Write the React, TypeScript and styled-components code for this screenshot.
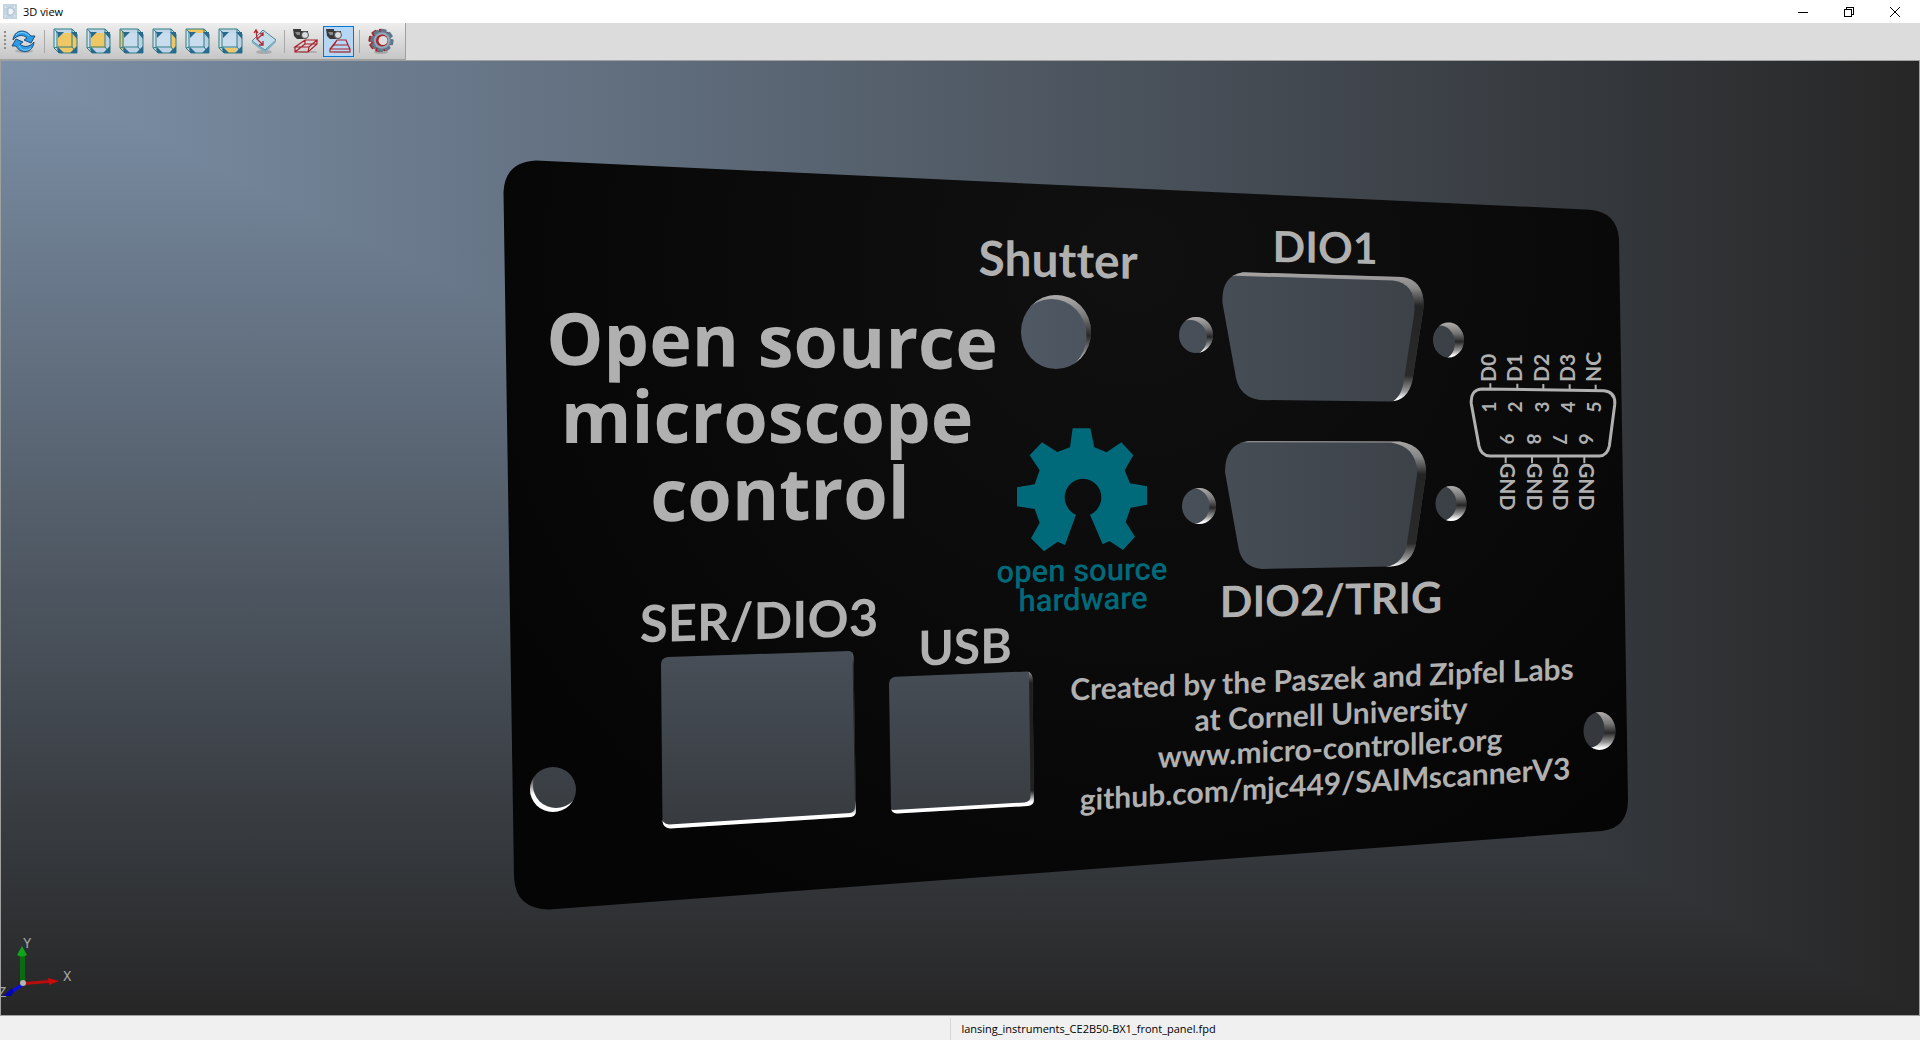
import React from "react";
import styled, { createGlobalStyle, css } from "styled-components";

const UI_FONT = '"Open Sans", "Noto Sans", sans-serif';
const PANEL_FONT = 'Lato, "Open Sans", sans-serif';
const HEADING_FONT = '"Open Sans", "Noto Sans", sans-serif';

const SKY = "#7d91a8, #262626";

const GlobalStyle = createGlobalStyle`
  * { box-sizing: border-box; }
  body { margin: 0; font-family: ${UI_FONT}; font-size: 11px; color: #000; }
`;

const Window = styled.div`
  display: flex;
  flex-direction: column;
  height: 100vh;
  overflow: hidden;
  background: #fff;
`;

const TitleBar = styled.header`
  display: flex;
  align-items: center;
  height: 23px;
  padding: 0 2px 0 3px;
  background: #fff;
`;

const Title = styled.h1`
  flex: 1;
  margin: 0 0 0 6px;
  font-size: 11px;
  font-weight: 400;
  line-height: 20px;
`;

const CaptionButton = styled.button`
  display: flex;
  align-items: center;
  justify-content: center;
  width: 46px;
  height: 20px;
  padding: 0;
  border: 0;
  background: transparent;
`;

const ToolArea = styled.div`
  display: flex;
  height: 38px;
  background: #dcdcdc;
  border-bottom: 1px solid #a0a0a0;
`;

const ToolBar = styled.nav`
  display: flex;
  align-items: center;
  padding: 0 9px 0 4px;
  background: linear-gradient(#eeeeee, #c6c6c6);
  border-right: 1px solid #a0a0a0;
  border-bottom: 1px solid #a0a0a0;
`;

const Grip = styled.span`
  width: 2px;
  height: 20px;
  margin-right: 2px;
  background: repeating-linear-gradient(#8c8c8c 0 2px, transparent 2px 4px);
`;

const Separator = styled.span`
  width: 1px;
  height: 23px;
  margin: 0 5px;
  background: #a8a8a8;
`;

const Group = styled.div`
  display: flex;
  gap: 2px;
`;

const ToolButton = styled.button<{ $active?: boolean }>`
  display: flex;
  align-items: center;
  justify-content: center;
  width: 31px;
  height: 31px;
  padding: 0;
  border: 1px solid transparent;
  background: transparent;
  ${(p) =>
    p.$active &&
    css`
      border-color: #0078d7;
      background: #b5d7f3;
    `}
`;

const Viewport = styled.main`
  position: relative;
  flex: 1;
  min-height: 0;
  border: solid #a0a0a0;
  border-width: 0 1px 1px;
  background: linear-gradient(to right, ${SKY});

  &::before {
    content: "";
    position: absolute;
    inset: 0;
    background: linear-gradient(to bottom, ${SKY});
    clip-path: polygon(0 0, 100% 100%, 0 100%);
  }
`;

const Scene = styled.svg`
  position: absolute;
  inset: 0;
  width: 100%;
  height: 100%;
`;

const AxisTriad = styled.svg`
  position: absolute;
  left: 0;
  bottom: 0;
`;

const AxisName = styled.text`
  font-family: "Liberation Mono", monospace;
  font-size: 14px;
  fill: #a8a8a8;
`;

const Engraving = styled.text<{ $size: number; $align?: "middle" | "start"; $heading?: boolean }>`
  font-family: ${(p) => (p.$heading ? HEADING_FONT : PANEL_FONT)};
  font-weight: 700;
  font-size: ${(p) => p.$size}px;
  font-variant-ligatures: none;
  text-anchor: ${(p) => p.$align ?? "middle"};
  fill: #b0b0b0;
`;

const LogoText = styled.text`
  font-family: Roboto, sans-serif;
  font-weight: 500;
  font-size: 31px;
  text-anchor: middle;
  fill: #006a7a;
`;

const StatusBar = styled.footer`
  display: grid;
  grid-template-columns: 99fr 101fr;
  height: 24px;
  padding: 2px 0;
  background: #f0f0f0;
`;

const StatusCell = styled.span`
  padding: 0 10px;
  line-height: 22px;

  & + & {
    border-left: 1px solid #d7d7d7;
  }
`;

/* ---------- toolbar icons ---------- */

type Face = "front" | "back" | "left" | "right" | "top" | "bottom";

const GOLD = "#efc765";

function CubeIcon({ face }: { face: Face }) {
  const tint = (f: Face, base: string) => (face === f ? GOLD : base);
  return (
    <svg width="25" height="26" viewBox="0 0 25 26" aria-hidden="true">
      <path d="M1 1H20L24 6V25H6L1 20Z" fill="#c5d9ea" />
      <path d="M1 1H20L23 5H5Z" fill={tint("top", "#c2d6e6")} />
      <path d="M1 1L5 5V23L1 20Z" fill={tint("left", "#d3e2ef")} />
      <path d="M5 5H19V20H5Z" fill={tint("back", "#c9dcee")} />
      <path d="M19 5L24 8V21L19 24Z" fill={tint("right", "#bcd2e4")} />
      <path d="M7 20H19L17 25H9Z" fill={tint("bottom", "#bdd3e5")} />
      {face === "front" && <path d="M10 5H19L24 10V20L19 25H10L5 20V10Z" fill={GOLD} />}
      <path
        d="M4 4V20L6 25H24V6L19 1V19L23 24M1 1H19M1 1V20L5 24M1 20L5 19H19"
        fill="none"
        stroke="#2f7d82"
        strokeWidth="1"
      />
      <path d="M1 1L5 6V10L11 4H5Z" fill="#27698f" />
      <path d="M18 4H24V11Z" fill="#27698f" />
      <path d="M5 19V25H11Z" fill="#27698f" />
      <path d="M24 18V25H17Z" fill="#27698f" />
    </svg>
  );
}

function RefreshIcon() {
  return (
    <svg width="25" height="26" viewBox="0 0 25 26" aria-hidden="true">
      <ellipse cx="13" cy="23" rx="9" ry="2" fill="#b0b0b0" />
      <g fill="#2f9be6" stroke="#1b4f7c" strokeWidth="1" strokeLinejoin="round">
        <path d="M2 12C3 2 14 0 20 8L24 8L20 15L13 12L16 10C12 6 6 7 2 12Z" />
        <path d="M23 14C22 25 10 27 5 18L1 18L5 11L12 14L9 16C13 20 19 19 23 14Z" />
      </g>
      <path d="M5 7C9 3 15 4 18 8M20 20C15 24 10 22 8 18" fill="none" stroke="#7fd0ff" />
    </svg>
  );
}

function TiltIcon() {
  return (
    <svg width="25" height="26" viewBox="0 0 25 26" aria-hidden="true">
      <ellipse cx="13" cy="24" rx="8" ry="2" fill="#aaa" />
      <path d="M12 2L25 12L14 22L1 13Z" fill="#c2dcec" stroke="#4a8793" />
      <path d="M1 13L14 22L25 12V14L14 25L1 15Z" fill="#7fb0c4" />
      <path
        d="M5 2L6 11L12 17M6 11L12 6M3 5L5 2L7 5M9 6L12 5L12 8M8 17L12 17L12 13"
        fill="none"
        stroke="#b5252c"
        strokeWidth="1.3"
      />
    </svg>
  );
}

function CameraIcon({ perspective }: { perspective?: boolean }) {
  return (
    <svg width="25" height="26" viewBox="0 0 25 26" aria-hidden="true">
      <path d="M5 23H23L24 25H8Z" fill="#999" opacity="0.6" />
      <path d="M0 1H8V3H15V9L13 11H4L1 8Z" fill="#3a3a3a" />
      <path d="M2 4H7V7H4Z" fill="#8a8a8a" />
      <circle cx="12" cy="7" r="3.5" fill="#d9dde0" stroke="#555" />
      <path
        d={
          perspective
            ? "M11 12H20L22 17H8ZM8 17L4 21V24H24V21L22 17M4 21H24M11 12L4 21"
            : "M12 12H24L16 19H2ZM2 19V24H15L24 16V12M16 19L15 24M12 12V16L2 24M12 16H24"
        }
        fill="none"
        stroke="#a8202c"
        strokeWidth="1.2"
      />
    </svg>
  );
}

function SettingsIcon() {
  const teeth = (fill: string) =>
    [0, 45, 90, 135, 180, 225, 270, 315].map((a) => (
      <rect key={a} x="10" y="1" width="6" height="6" rx="1" fill={fill} transform={`rotate(${a + 10} 13 12.5)`} />
    ));
  return (
    <svg width="26" height="26" viewBox="0 0 26 26" aria-hidden="true">
      <ellipse cx="13" cy="24" rx="7" ry="2" fill="#aaa" />
      <g transform="translate(-1 0)">
        {teeth("#a5262b")}
        <circle cx="13" cy="12.5" r="9" fill="#a5262b" />
      </g>
      <g transform="translate(1 0)">
        {teeth("#5f7789")}
        <circle cx="13" cy="12.5" r="9" fill="#6c8497" />
        <circle cx="13" cy="12.5" r="8" fill="#93a9ba" />
        <circle cx="13" cy="12.5" r="6" fill="#a8222a" />
        <circle cx="14" cy="12.5" r="4.5" fill="#dedede" />
      </g>
    </svg>
  );
}

function AppIcon() {
  return (
    <svg width="14" height="15" viewBox="0 0 14 15" aria-hidden="true">
      <rect width="14" height="15" fill="#c3d4e2" />
      <path d="M5 4H8Q11 5 11 7.500Q11 10 8 11H5Z" fill="#eff4f8" stroke="#9fb5c6" strokeWidth="0.8" />
      <path d="M2 3h1M2 12h1M11 3h1M11 12h1" stroke="#fff" />
    </svg>
  );
}

/* ---------- the front panel ---------- */

type Cutout = { id: string; d: string; back: [number, number]; wall: string };

const oval = (cx: number, cy: number, rx: number, ry: number) =>
  `M${cx - rx} ${cy}A${rx} ${ry} 0 1 1 ${cx + rx} ${cy}A${rx} ${ry} 0 1 1 ${cx - rx} ${cy}Z`;

const CUTOUTS: Cutout[] = [
  { id: "shutter", d: oval(1056, 332, 35, 37), back: [-4.5, 4], wall: "round" },
  { id: "dio1l", d: oval(1196, 335, 17, 18), back: [-6, 3], wall: "round" },
  { id: "dio1r", d: oval(1448.5, 340, 15.5, 17.5), back: [-9, 3], wall: "round" },
  { id: "dio2l", d: oval(1199, 506, 17, 18), back: [-6.5, 0], wall: "round" },
  { id: "dio2r", d: oval(1451, 503.5, 15.5, 17.5), back: [-10, 0], wall: "round" },
  { id: "mountl", d: oval(553, 789.5, 23, 22.5), back: [3, -4], wall: "bright" },
  { id: "mountr", d: oval(1599.5, 731, 16, 19), back: [-11, -2], wall: "round" },
  {
    id: "dio1",
    d: "M1243 272.3L1402 277Q1425 280 1423.500 308L1412.5 380Q1408 401 1390 401.5L1260 400Q1240 397 1236 378L1222.500 303Q1221 276 1243 272.3Z",
    back: [-9, 3.5],
    wall: "dsub",
  },
  {
    id: "dio2",
    d: "M1248 441.2L1400 441.500Q1427 446 1426 474L1415.500 546Q1410 566 1390 566.500L1262 569Q1242 567 1238.500 548L1225 472Q1225 444 1248 441.2Z",
    back: [-9, 1],
    wall: "dsub",
  },
  {
    id: "ser",
    d: "M668 657L849 651Q853 651 853.500 657L856 811Q856 816 851 817L670 828.5Q663 828 662.500 821L661 664Q661 658 668 657Z",
    back: [-1, -4],
    wall: "square",
  },
  {
    id: "usb",
    d: "M895 676.7L1027 671.500Q1032 672 1032.500 678L1034 800Q1034 805 1028 806L897 813.500Q891 813 891 807L889 684Q889 678 895 676.7Z",
    back: [-3.5, -3.5],
    wall: "square",
  },
];

const OUTLINE =
  "M536 160.5L1590 209.700Q1617 212 1619 239L1628 800Q1628 828 1602 831L549 909.500Q516 909 514 878L503.500 192Q505 162 536 160.5Z";

const LABELS = [
  { text: "Open source", x: 772, y: 367, size: 72, slope: 0.6, heading: true },
  { text: "microscope", x: 767, y: 443, size: 72, slope: 0, heading: true },
  { text: "control", x: 780, y: 520, size: 72, slope: -0.6, heading: true },
  { text: "Shutter", x: 1058, y: 277, size: 48, slope: 1.3 },
  { text: "DIO1", x: 1325, y: 263, size: 43, slope: 1.2 },
  { text: "DIO2/TRIG", x: 1331, y: 615, size: 43, slope: -1.2 },
  { text: "SER/DIO3", x: 759, y: 639, size: 51, slope: -1.6 },
  { text: "USB", x: 965, y: 664, size: 48, slope: -1.8 },
  { text: "Created by the Paszek and Zipfel Labs", x: 1322, y: 690, size: 30, slope: -2.4 },
  { text: "at Cornell University", x: 1331, y: 725, size: 30, slope: -2.6 },
  { text: "www.micro-controller.org", x: 1330, y: 759, size: 30, slope: -3 },
  { text: "github.com/mjc449/SAIMscannerV3", x: 1325, y: 795, size: 30, slope: -3.7 },
];

const UPPER_PINS = [
  { x: 1496, pin: "1", name: "D0" },
  { x: 1522, pin: "2", name: "D1" },
  { x: 1549, pin: "3", name: "D2" },
  { x: 1575, pin: "4", name: "D3" },
  { x: 1601, pin: "5", name: "NC" },
];

const LOWER_PINS = [
  { x: 1500, pin: "9" },
  { x: 1527, pin: "8" },
  { x: 1553, pin: "7" },
  { x: 1579, pin: "6" },
];

function Pinout() {
  return (
    <g>
      <g transform="translate(1440 200) scale(0.33333)" fill="none" stroke="#b0b0b0" strokeWidth="9">
        <path d="M125 567L492 572Q528 576 524 615L508 738Q502 767 478 768L150 768Q123 767 117 738L94 612Q90 570 125 567Z" />
        <path
          strokeWidth="6"
          d="M151 550V568M232 551V569M310 552V570M389 553V571M467 554V572M197 768V790M276 768V790M355 768V790M433 768V790"
        />
      </g>
      {UPPER_PINS.map((p) => (
        <g key={p.pin}>
          <Engraving $size={21} $align="start" transform={`translate(${p.x} 382) rotate(-90)`}>
            {p.name}
          </Engraving>
          <Engraving $size={19} transform={`translate(${p.x} 407) rotate(-90)`}>
            {p.pin}
          </Engraving>
        </g>
      ))}
      {LOWER_PINS.map((p) => (
        <g key={p.pin}>
          <Engraving $size={19} transform={`translate(${p.x} 439) rotate(90)`}>
            {p.pin}
          </Engraving>
          <Engraving $size={21} $align="start" transform={`translate(${p.x} 463) rotate(90)`}>
            GND
          </Engraving>
        </g>
      ))}
    </g>
  );
}

function HardwareLogo() {
  return (
    <g>
      <path
        transform="translate(960 220) scale(0.33333)"
        fill="#006a7a"
        d="M338 625H391L403 682L440 697L484 667L520 706L494 751L510 790L561 799V854L512 863L497 906L525 950L489 990L448 963L428 973L390 884A55 56 0 1 0 348 884L315 975L293 965L252 994L213 955L239 908L224 867L171 859V802L224 793L239 751L209 706L246 667L292 696L330 682Z"
      />
      <LogoText transform="translate(1082 581) skewY(-1)">open source</LogoText>
      <LogoText transform="translate(1083 610) skewY(-1.4)">hardware</LogoText>
    </g>
  );
}

function FrontPanel() {
  return (
    <Scene viewBox="1 61 1918 954" role="img" aria-label="Front panel">
      <defs>
        <radialGradient id="face" gradientUnits="userSpaceOnUse" cx="1130" cy="260" r="720">
          <stop offset="0" stopColor="#101010" />
          <stop offset="0.5" stopColor="#0b0b0b" />
          <stop offset="1" stopColor="#050505" />
        </radialGradient>
        <linearGradient id="round" x2="0" y2="1">
          <stop offset="0" stopColor="#b0acac" />
          <stop offset="0.3" stopColor="#777" />
          <stop offset="0.55" stopColor="#262626" />
          <stop offset="0.8" stopColor="#999" />
          <stop offset="0.95" stopColor="#fff" />
        </linearGradient>
        <linearGradient id="dsub" x2="0" y2="1">
          <stop offset="0" stopColor="#a8a4a4" />
          <stop offset="0.12" stopColor="#888" />
          <stop offset="0.26" stopColor="#242424" />
          <stop offset="0.8" stopColor="#2a2a2a" />
          <stop offset="0.92" stopColor="#999" />
          <stop offset="0.98" stopColor="#fff" />
        </linearGradient>
        <linearGradient id="square" x2="0" y2="1">
          <stop offset="0" stopColor="#888" />
          <stop offset="0.08" stopColor="#202020" />
          <stop offset="0.84" stopColor="#202020" />
          <stop offset="0.92" stopColor="#fff" />
        </linearGradient>
        <linearGradient id="bright" x2="0" y2="1">
          <stop offset="0.2" stopColor="#222" />
          <stop offset="0.6" stopColor="#fff" />
        </linearGradient>
        {CUTOUTS.map((c) => (
          <mask key={c.id} id={`wall-${c.id}`} maskUnits="userSpaceOnUse" x="0" y="0" width="1920" height="1040">
            <rect width="1920" height="1040" fill="#fff" />
            <path d={c.d} transform={`translate(${c.back[0]} ${c.back[1]})`} fill="#000" />
          </mask>
        ))}
      </defs>
      <path d={OUTLINE + CUTOUTS.map((c) => c.d).join("")} fill="url(#face)" fillRule="evenodd" />
      {CUTOUTS.map((c) => (
        <g key={c.id} mask={`url(#wall-${c.id})`}>
          <path d={c.d} fill={`url(#${c.wall})`} />
        </g>
      ))}
      {LABELS.map((l) => (
        <Engraving
          key={l.text}
          $size={l.size}
          $heading={l.heading}
          transform={`translate(${l.x} ${l.y}) skewY(${l.slope})`}
        >
          {l.text}
        </Engraving>
      ))}
      <HardwareLogo />
      <Pinout />
    </Scene>
  );
}

function Axes() {
  return (
    <AxisTriad width="80" height="80" viewBox="0 0 80 80" role="img" aria-label="Axes">
      <path d="M19 18H24V48H19Z" fill="#0a6b12" />
      <path d="M21 11L26 20Q21 23 16 20Z" fill="#0fa51a" />
      <path d="M23 47L48 45V48L23 50Z" fill="#b80d0d" />
      <path d="M47 43L58 46L48 50Z" fill="#cc0a0a" />
      <path d="M20 49L8 56L10 59L22 51Z" fill="#0b0bf0" />
      <path d="M11 53L2 61L10 61L13 57Z" fill="#0505b0" />
      <circle cx="22" cy="48" r="3" fill="#b5b5b5" />
      <AxisName x="22" y="13">Y</AxisName>
      <AxisName x="62" y="46">X</AxisName>
      <AxisName x="-3" y="62">Z</AxisName>
    </AxisTriad>
  );
}

const VIEWS: { face: Face; label: string }[] = [
  { face: "front", label: "Front view" },
  { face: "back", label: "Back view" },
  { face: "left", label: "Left view" },
  { face: "right", label: "Right view" },
  { face: "top", label: "Top view" },
  { face: "bottom", label: "Bottom view" },
];

export default function App() {
  return (
    <Window>
      <GlobalStyle />
      <TitleBar>
        <AppIcon />
        <Title>3D view</Title>
        <CaptionButton aria-label="Minimize">
          <svg width="10" height="10" viewBox="0 0 10 10" shapeRendering="crispEdges">
            <path d="M0 5.500H10" stroke="#000" />
          </svg>
        </CaptionButton>
        <CaptionButton aria-label="Restore">
          <svg width="10" height="10" viewBox="0 0 10 10" fill="none" stroke="#000" shapeRendering="crispEdges">
            <path d="M0.500 2.500H7.500V9.500H0.500ZM2.500 2.500V0.500H9.500V7.500H7.500" />
          </svg>
        </CaptionButton>
        <CaptionButton aria-label="Close">
          <svg width="10" height="10" viewBox="0 0 10 10">
            <path d="M0 0L10 10M10 0L0 10" stroke="#000" />
          </svg>
        </CaptionButton>
      </TitleBar>
      <ToolArea>
        <ToolBar aria-label="View tools">
          <Grip />
          <ToolButton aria-label="Refresh">
            <RefreshIcon />
          </ToolButton>
          <Separator />
          <Group>
            {VIEWS.map((v) => (
              <ToolButton key={v.face} aria-label={v.label}>
                <CubeIcon face={v.face} />
              </ToolButton>
            ))}
            <ToolButton aria-label="Axonometric view">
              <TiltIcon />
            </ToolButton>
          </Group>
          <Separator />
          <Group>
            <ToolButton aria-label="Parallel projection">
              <CameraIcon />
            </ToolButton>
            <ToolButton $active aria-pressed="true" aria-label="Perspective projection">
              <CameraIcon perspective />
            </ToolButton>
          </Group>
          <Separator />
          <ToolButton aria-label="Settings">
            <SettingsIcon />
          </ToolButton>
        </ToolBar>
      </ToolArea>
      <Viewport>
        <FrontPanel />
        <Axes />
      </Viewport>
      <StatusBar>
        <StatusCell />
        <StatusCell>lansing_instruments_CE2B50-BX1_front_panel.fpd</StatusCell>
      </StatusBar>
    </Window>
  );
}
